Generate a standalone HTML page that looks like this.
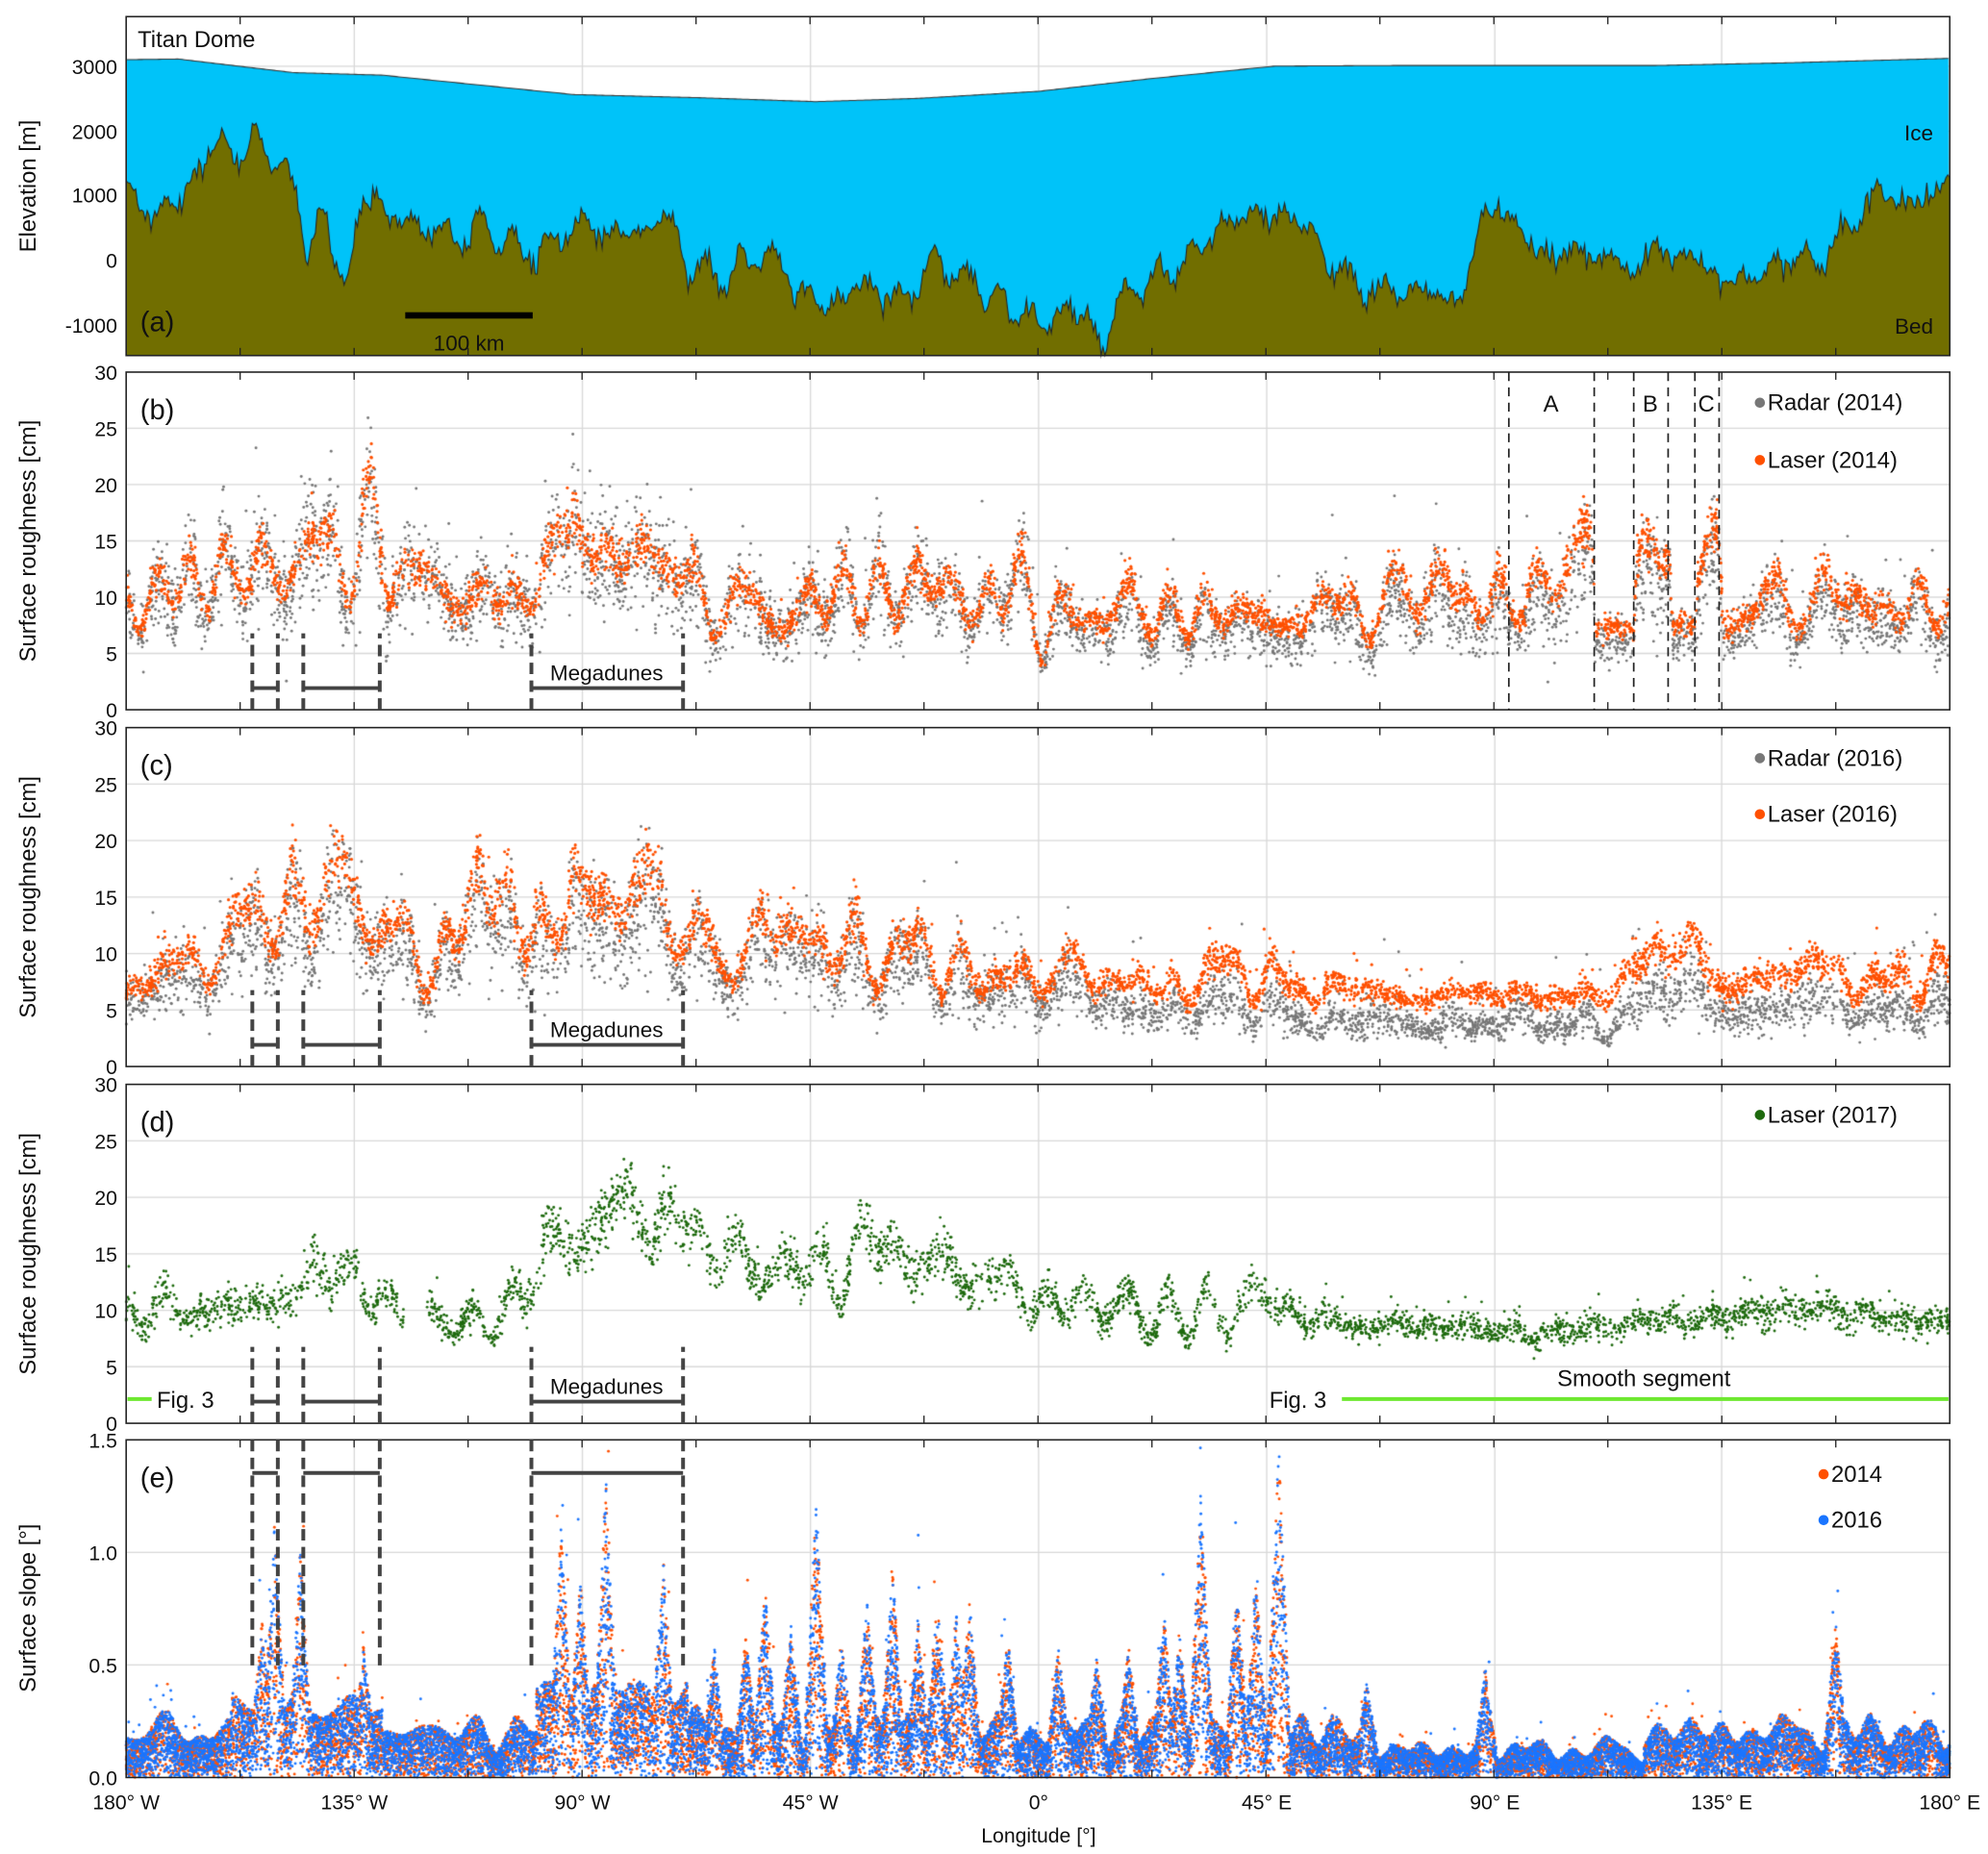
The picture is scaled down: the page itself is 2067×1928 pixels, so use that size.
<!DOCTYPE html>
<html><head><meta charset="utf-8"><style>
html,body{margin:0;padding:0;background:#fff;width:2067px;height:1928px;overflow:hidden}
#c{position:absolute;left:0;top:0}
#s{position:absolute;left:0;top:0}
text{font-family:"Liberation Sans",Arial,sans-serif;fill:#111}
</style></head><body>
<canvas id="c" width="2067" height="1928"></canvas>
<svg id="s" width="2067" height="1928" viewBox="0 0 1560 1455" xmlns="http://www.w3.org/2000/svg"></svg>
<script>
const S=2067/1560;
const cv=document.getElementById('c'),ctx=cv.getContext('2d');ctx.scale(S,S);
const svg=document.getElementById('s');
const NS='http://www.w3.org/2000/svg';
function el(t,a,txt){const e=document.createElementNS(NS,t);for(const k in a)e.setAttribute(k,a[k]);if(txt!=null)e.textContent=txt;svg.appendChild(e);return e;}
let seed=12345;function rnd(){seed=(seed*16807)%2147483647;return (seed-1)/2147483646;}
function gauss(){let u=rnd()||1e-9,v=rnd();return Math.sqrt(-2*Math.log(u))*Math.cos(2*Math.PI*v);}
function interp(pts,x){for(let i=0;i<pts.length-1;i++){if(x>=pts[i][0]&&x<=pts[i+1][0]){const t=(x-pts[i][0])/(pts[i+1][0]-pts[i][0]);return pts[i][1]+t*(pts[i+1][1]-pts[i][1]);}}return pts[pts.length-1][1];}
function mkNoise(){const c=[];for(let i=0;i<14;i++)c.push([0.02+rnd()*0.25,rnd()*7,(0.4+rnd())]);return x=>{let s=0;for(const [f,p,a] of c)s+=a*Math.sin(x*f+p);return s/3.5;};}
const X0=99,X1=1530;
const gx=[278,457,636,815,994,1173,1351];
const panels=[[13,279],[292,557],[571,837],[851,1117],[1130,1395]];
ctx.strokeStyle='#d8d8d8';ctx.lineWidth=1;
panels.forEach(([t,b],i)=>{gx.forEach(x=>{ctx.beginPath();ctx.moveTo(x,t);ctx.lineTo(x,b);ctx.stroke();});
 let ys=[];if(i==0)ys=[52,103,153,204,255];else if(i<4){for(let v=5;v<30;v+=5)ys.push(b-(b-t)*v/30);}else{for(let v=0.5;v<1.5;v+=0.5)ys.push(b-(b-t)*v/1.5);}
 ys.forEach(y=>{ctx.beginPath();ctx.moveTo(X0,y);ctx.lineTo(X1,y);ctx.stroke();});});
function ey(m){return 204-m*0.0507;}
const ice=[[99,3100],[140,3110],[230,2900],[300,2860],[450,2560],[550,2510],[640,2450],[720,2500],[815,2610],[900,2800],[1000,3000],[1100,3010],[1300,3010],[1400,3050],[1530,3120]];
const bed=[[99,1000],[120,1000],[140,1200],[160,1500],[175,1700],[190,1500],[200,1700],[220,1500],[235,600],[240,300],[250,800],[265,200],[275,0],[285,900],[295,1100],[305,300],[320,500],[360,400],[400,600],[430,200],[470,300],[520,600],[545,0],[600,-100],[620,-400],[640,-700],[660,-600],[680,-200],[700,-400],[740,-400],[780,-400],[800,-800],[820,-900],[840,-500],[850,-700],[865,-1350],[880,-1000],[900,-600],[920,0],[950,400],[970,600],[990,800],[1010,700],[1030,300],[1045,-200],[1080,-400],[1120,-500],[1150,-500],[1165,600],[1200,300],[1260,100],[1300,0],[1320,-200],[1350,-100],[1380,-200],[1420,0],[1450,500],[1470,900],[1490,1000],[1510,1000],[1530,1300]];
const bn=mkNoise();
ctx.fillStyle='#00c3f9';ctx.beginPath();ctx.moveTo(X0,279);for(let x=X0;x<=X1;x+=2)ctx.lineTo(x,ey(interp(ice,x)));ctx.lineTo(X1,279);ctx.fill();
ctx.strokeStyle='#333';ctx.lineWidth=0.8;ctx.beginPath();for(let x=X0;x<=X1;x+=2){const y=ey(interp(ice,x));x==X0?ctx.moveTo(x,y):ctx.lineTo(x,y);}ctx.stroke();
ctx.fillStyle='#716e00';ctx.beginPath();ctx.moveTo(X0,279);let bedv=[];for(let x=X0;x<=X1;x+=1.5){let v=interp(bed,x)+gauss()*90+bn(x)*250;bedv.push([x,Math.min(279,ey(v))]);ctx.lineTo(x,Math.min(279,ey(v)));}ctx.lineTo(X1,279);ctx.fill();
ctx.strokeStyle='#222';ctx.beginPath();bedv.forEach(([x,y],i)=>{i?ctx.lineTo(x,y):ctx.moveTo(x,y)});ctx.stroke();
function dots(t,b,max,pts,col,noise,n,r,wig,nz,extra){const h=b-t;ctx.fillStyle=col;
 for(let i=0;i<n;i++){const x=X0+rnd()*(X1-X0);if(extra&&extra(x))continue;let m=interp(pts,x);m+=nz(x)*wig*(m/10);let v=m+gauss()*noise*(m/10)+(rnd()<0.02?rnd()*noise*4:0);if(v<0)v=0.05;const y=b-h*v/max;if(y<t)continue;ctx.beginPath();ctx.arc(x,y,r,0,7);ctx.fill();}}
const b_l=[[99,10],[150,11],[190,12],[205,14],[225,11],[245,15],[280,14],[300,15],[320,12],[360,10],[415,10],[430,13],[450,17],[470,14],[500,13],[525,14],[540,11],[560,9],[640,9],[680,11],[800,10],[820,8],[900,9],[1000,8],[1100,10],[1160,11],[1185,8],[1200,11],[1240,14],[1250,14],[1252,7.2],[1282,7.2],[1284,13],[1310,13.5],[1312,7.5],[1330,7.5],[1332,14],[1349,14],[1352,8],[1390,9],[1400,11],[1420,10],[1530,9]];
const flat=x=>(x>1252&&x<1282)||(x>1312&&x<1330);
const b_r=b_l.map(([x,v])=>[x,x>820?(x>1252&&x<1282?5:(x>1312&&x<1330?5.5:v*0.85)):v*0.95]);
let n1=mkNoise();
dots(292,557,30,b_r,'#777',1.8,5000,1.1,2.5,x=>flat(x)?0:n1(x));
dots(292,557,30,b_l,'#ff5000',0.7,4500,1.2,2.5,x=>flat(x)?0:n1(x));
const c_l=[[99,7],[150,9],[180,10],[200,16],[220,13],[240,16],[300,13],[310,11],[360,11],[390,16],[410,13],[430,11],[450,20],[470,13],[520,16],[540,11],[600,11],[700,11],[715,9],[815,8],[900,7.5],[1000,8],[1050,7],[1100,6],[1160,7],[1180,6],[1260,6.5],[1290,9],[1310,9.5],[1330,10],[1350,8],[1500,8],[1530,8]];
const c_r=c_l.map(([x,v])=>[x,x>815?(x>1040&&x<1270?3.8:v*0.65):v*0.85]);
let n2=mkNoise();
dots(571,837,30,c_r,'#777',1.8,5000,1.1,2.2,n2);
dots(571,837,30,c_l,'#ff5000',0.8,4500,1.2,2.2,x=>x>1040&&x<1270?n2(x)*0.4:n2(x));
const d_l=[[99,9.5],[190,9.5],[205,11],[230,10],[245,14],[300,11],[320,11],[345,10],[390,9],[410,12],[460,17],[520,19],[540,15],[600,14],[700,16],[720,14],[790,12],[815,10],[900,10],[1000,11],[1040,9],[1100,8.5],[1200,8],[1300,9],[1400,10],[1530,9]];
let n3=mkNoise();
dots(851,1117,30,d_l,'#1e6a0e',0.7,4000,1.1,1.5,x=>x>1040?n3(x)*0.35:n3(x),x=>x>318&&x<335);
const sn=mkNoise();
const sp=[[215,1.0],[235,0.9],[205,0.6],[285,0.5],[440,1.0],[475,1.2],[455,0.8],[520,0.85],[640,1.1],[600,0.75],[680,0.7],[700,0.8],[735,0.7],[760,0.7],[942,1.15],[1003,1.35],[913,0.65],[970,0.75],[885,0.5],[830,0.5],[1165,0.4],[1440,0.6],[1072,0.35],[560,0.5],[585,0.55],[620,0.6],[660,0.55],[720,0.6],[750,0.65],[790,0.55],[860,0.45],[925,0.55],[985,0.8]];
const sm=[];
for(let x=X0;x<=X1;x++){let base=(x>1075&&x<1290?0.12:0.2)+sn(x)*0.06;
 if(x>420&&x<540)base+=0.18;if(x>180&&x<300)base+=0.1;
 let s=base;for(const [sx,h] of sp){const d=Math.abs(x-sx);if(d<10)s=Math.max(s,h*(1-d/10)+0.05);}
 sm.push(Math.max(0.06,s));}
function sdots(col,n){ctx.fillStyle=col;for(let i=0;i<n;i++){const x=X0+rnd()*(X1-X0);let m=sm[Math.floor(x-X0)];let v=m*Math.pow(rnd(),0.7)*1.05;if(rnd()<0.01)v*=1.6;const y=1395-265*v/1.5;if(y<1130)continue;ctx.beginPath();ctx.arc(x,y,1.1,0,7);ctx.fill();}}
sdots('#ff5000',15000);sdots('#1a75ff',16000);
panels.forEach(([t,b])=>el('rect',{x:X0,y:t,width:X1-X0,height:b-t,fill:'none',stroke:'#222','stroke-width':1.2}));
panels.forEach(([t,b])=>{for(let k=1;k<16;k++){const x=X0+(X1-X0)*k/16;el('line',{x1:x,y1:b,x2:x,y2:b-6,stroke:'#222'});el('line',{x1:x,y1:t,x2:x,y2:t+6,stroke:'#222'});}});
function T(x,y,s,txt,anchor,extra){const a={x:x,y:y,'font-size':s,'text-anchor':anchor||'start'};Object.assign(a,extra||{});return el('text',a,txt);}
[[3000,52],[2000,103],[1000,153],[0,204],[-1000,255]].forEach(([v,y])=>T(92,y+6,16,v,'end'));
T(108,37,18,'Titan Dome');T(110,260,22,'(a)');T(1517,110,17,'Ice','end');T(1517,262,17,'Bed','end');
el('rect',{x:318,y:245,width:100,height:5,fill:'#000'});T(368,275,17,'100 km','middle');
T(0,0,18,'Elevation [m]','middle',{transform:'translate(28,146) rotate(-90)'});
[[292,557],[571,837],[851,1117]].forEach(([t,b],i)=>{for(let v=0;v<=30;v+=5)T(92,b-(b-t)*v/30+6,16,v,'end');
 T(0,0,18,'Surface roughness [cm]','middle',{transform:`translate(28,${(t+b)/2}) rotate(-90)`});
 T(110,t+37,22,['(b)','(c)','(d)'][i]);
 const by=b-17;const col='#444';
 [[198,218],[238,298],[417,536]].forEach(([x1,x2])=>{el('line',{x1:x1,y1:by,x2:x2,y2:by,stroke:col,'stroke-width':3});
  [x1,x2].forEach(x=>el('line',{x1:x,y1:b,x2:x,y2:b-60,stroke:col,'stroke-width':3,'stroke-dasharray':'9,5'}));});
 T(476,by-6,17,'Megadunes','middle');
});
[[0,'0.0'],[0.5,'0.5'],[1,'1.0'],[1.5,'1.5']].forEach(([v,s])=>T(92,1395-265*v/1.5+6,16,s,'end'));
T(0,0,18,'Surface slope [°]','middle',{transform:'translate(28,1262) rotate(-90)'});
T(110,1167,22,'(e)');
[[198,218],[238,298],[417,536]].forEach(([x1,x2])=>{el('line',{x1:x1,y1:1156,x2:x2,y2:1156,stroke:'#444','stroke-width':3});
 [x1,x2].forEach(x=>el('line',{x1:x,y1:1130,x2:x,y2:1310,stroke:'#444','stroke-width':3,'stroke-dasharray':'9,5'}));});
const xl=['180° W','135° W','90° W','45° W','0°','45° E','90° E','135° E','180° E'];
[X0,...gx,X1].forEach((x,i)=>T(x,1420,16,xl[i],'middle'));
T(815,1446,16,'Longitude [°]','middle');
function leg(x,y,col,txt){el('circle',{cx:x,cy:y-6,r:4,fill:col});T(x+6,y,18,txt);}
leg(1381,322,'#777','Radar (2014)');leg(1381,367,'#ff5000','Laser (2014)');
leg(1381,601,'#777','Radar (2016)');leg(1381,645,'#ff5000','Laser (2016)');
leg(1381,881,'#1e6a0e','Laser (2017)');
leg(1431,1163,'#ff5000','2014');leg(1431,1199,'#1a75ff','2016');
[1184,1251,1282,1309,1330,1349].forEach(x=>el('line',{x1:x,y1:292,x2:x,y2:557,stroke:'#222','stroke-width':1.3,'stroke-dasharray':'7,5'}));
T(1217,323,18,'A','middle');T(1295,323,18,'B','middle');T(1339,323,18,'C','middle');
el('line',{x1:100,y1:1098,x2:119,y2:1098,stroke:'#6ee82f','stroke-width':3});
T(123,1105,18,'Fig. 3');
el('line',{x1:1053,y1:1098,x2:1529,y2:1098,stroke:'#6ee82f','stroke-width':3});
T(996,1105,18,'Fig. 3');T(1290,1088,18,'Smooth segment','middle');
</script>
</body></html>
